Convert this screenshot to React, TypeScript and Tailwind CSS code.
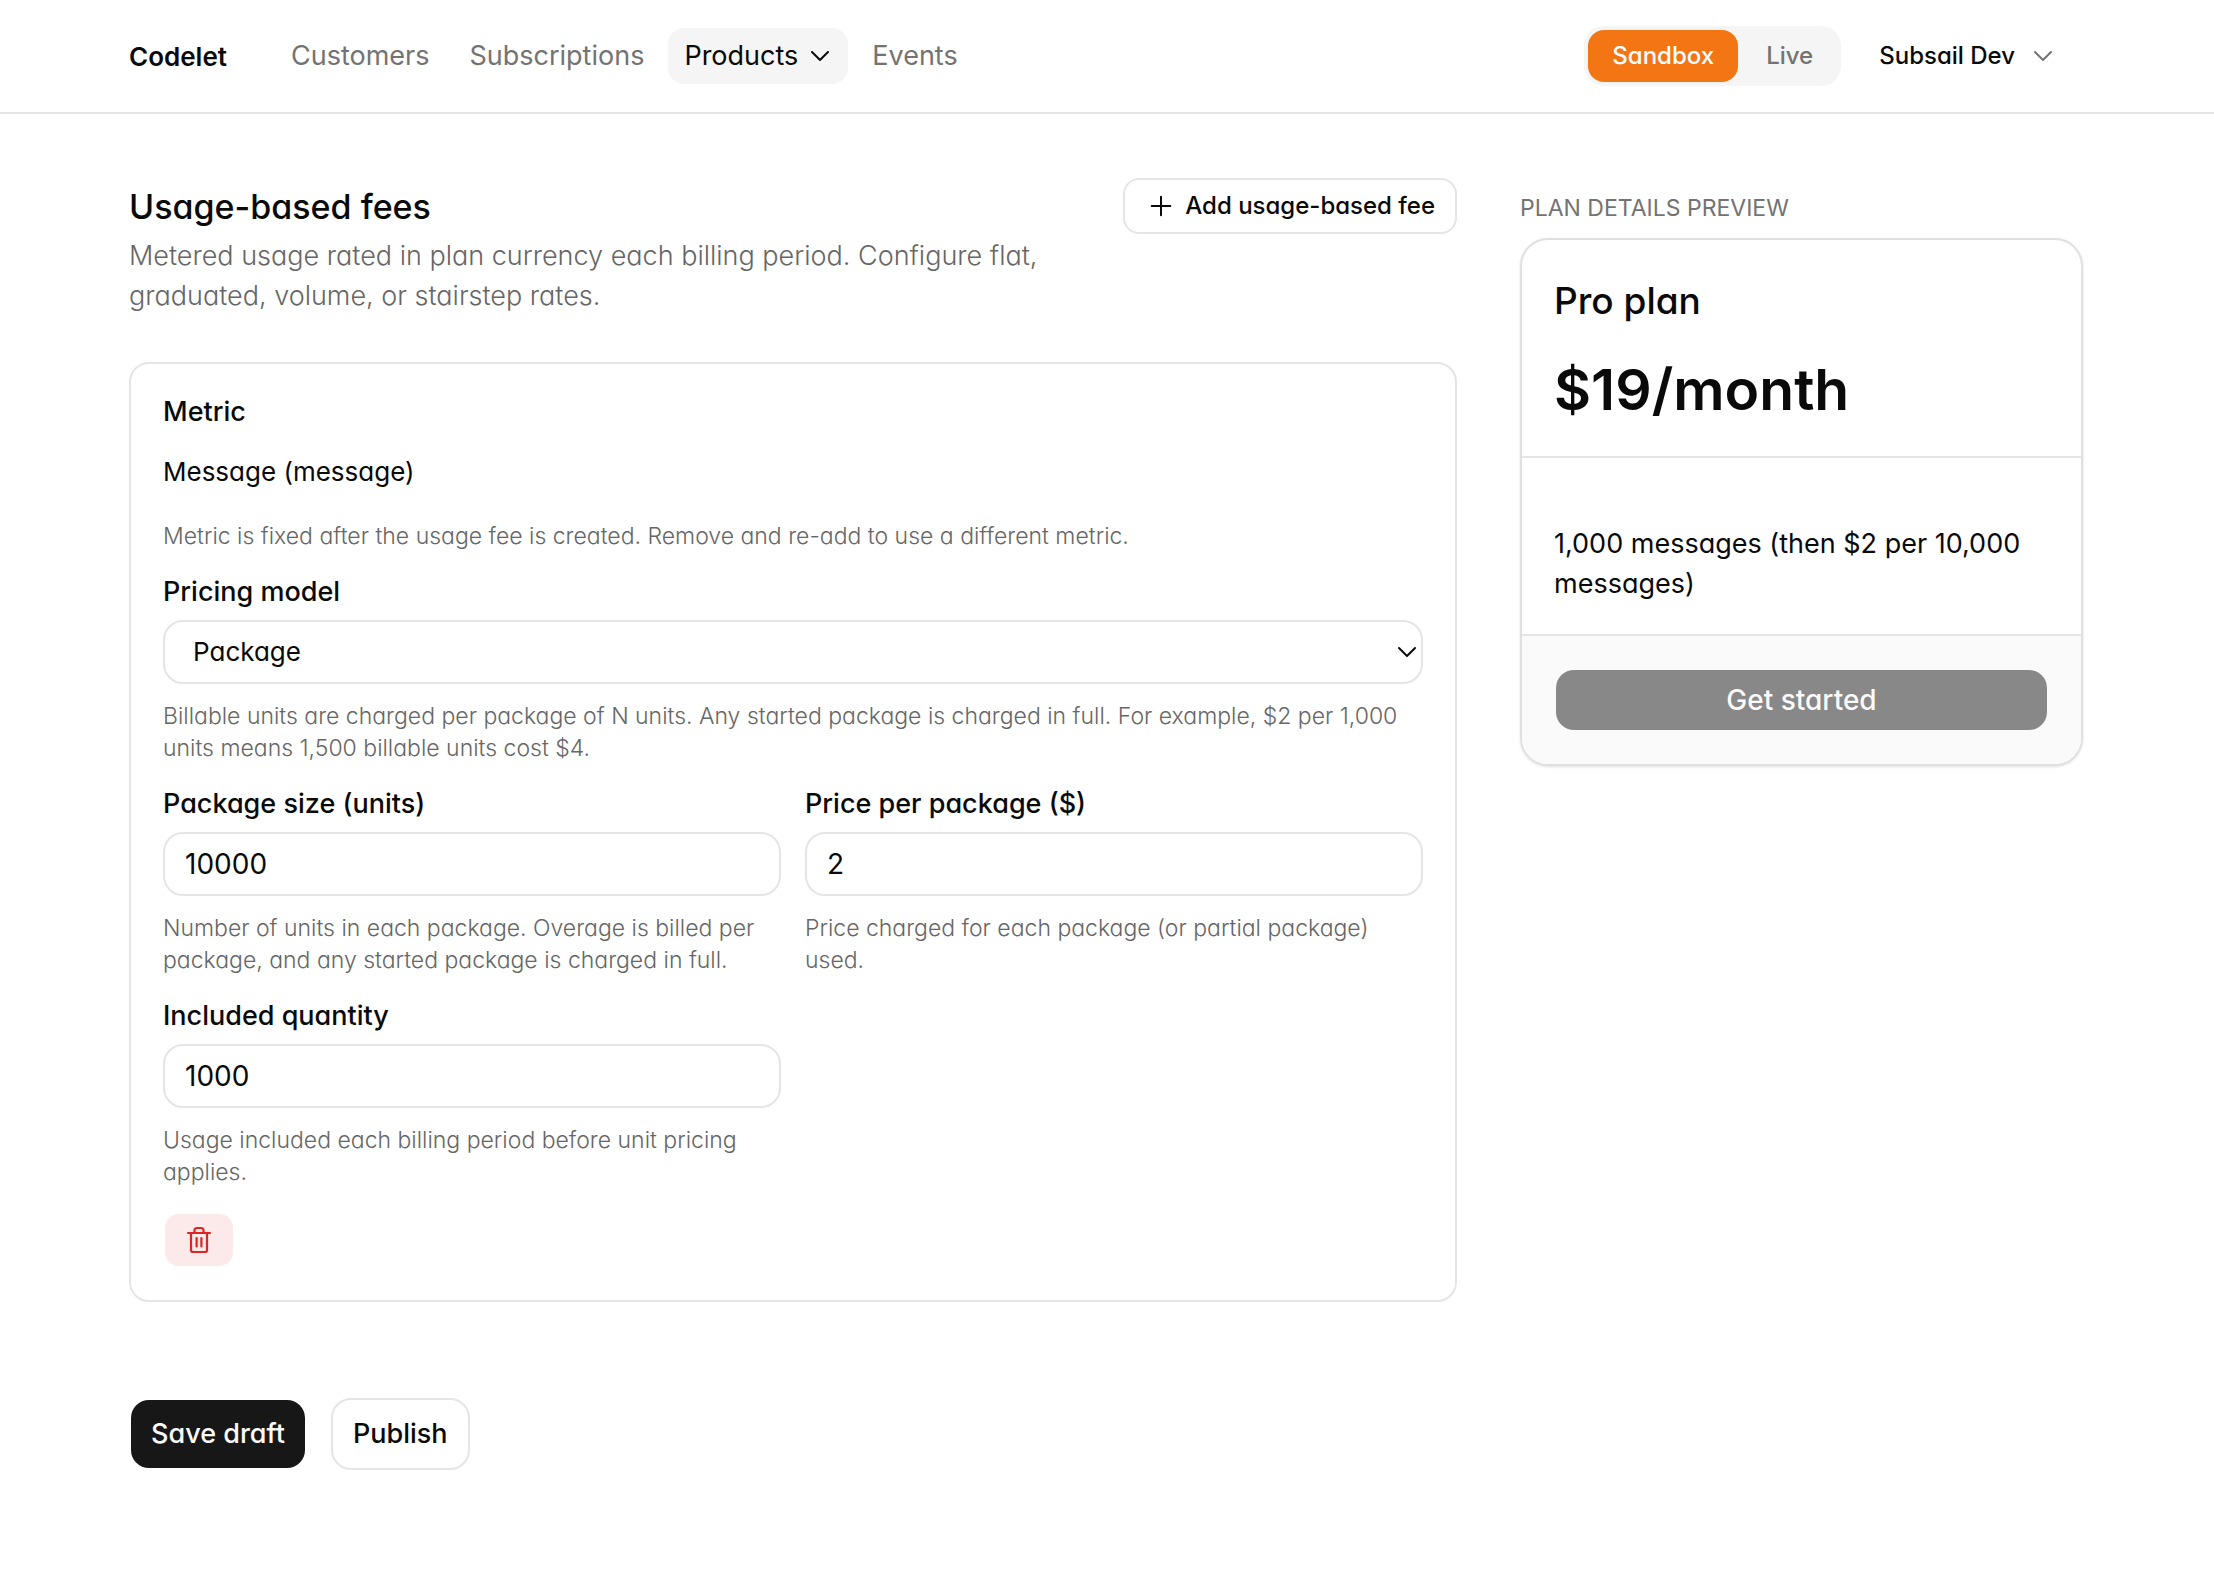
import { ChevronDown, Plus } from "lucide-react";
import type { ReactNode } from "react";

const outline =
  "border-2 border-[#e5e5e5] bg-white text-[#0a0a0a]";
const solid = "border-2 border-transparent bg-clip-padding";
const container = "mx-auto max-w-[2048px] pr-12 pl-[46px]";
const field =
  "h-16 w-full rounded-[20px] border-2 border-[#e5e5e5] bg-white leading-10 text-[#0a0a0a] outline-none";

function TrashIcon() {
  return (
    <svg viewBox="0 0 32 32" className="size-8" fill="none" stroke="currentColor" strokeWidth="2.200" strokeLinecap="round" strokeLinejoin="round" aria-hidden="true">
      <path d="M5 9h22" />
      <path d="M8 9v17a2 2 0 0 0 2 2h12a2 2 0 0 0 2-2V9" />
      <path d="M11.500 9V6.500a2.500 2.500 0 0 1 2.500-2.500h4a2.500 2.500 0 0 1 2.500 2.500V9" />
      <path d="M13.600 14v8.500M18.400 14v8.500" />
    </svg>
  );
}

function Label({ id, children }: { id?: string; children: ReactNode }) {
  return (
    <label htmlFor={id} className="block text-[27px] leading-10 font-medium">
      {children}
    </label>
  );
}

function Hint({ children }: { children: ReactNode }) {
  return <p className="mt-4 text-[23px] leading-8 font-light text-[#666666]">{children}</p>;
}

function NumberField({ id, label, value, hint }: { id: string; label: string; value: string; hint: string }) {
  return (
    <div>
      <Label id={id}>{label}</Label>
      <input id={id} type="text" inputMode="numeric" defaultValue={value} className={`${field} mt-2 px-5 text-[28px]`} />
      <Hint>{hint}</Hint>
    </div>
  );
}

function Header() {
  return (
    <header className="border-b-2 border-[#e5e5e5] bg-white">
      <div className={`${container} flex h-28 items-center`}>
        <a href="#home" className="text-[26px] font-semibold">Codelet</a>
        <nav className="ml-12 flex items-center gap-2 text-[27px] text-[#737373]">
          <a href="#customers" className="px-4">Customers</a>
          <a href="#subscriptions" className="px-4">Subscriptions</a>
          <button type="button" className="flex h-14 items-center gap-1.5 rounded-2xl bg-[#f5f5f5] pr-3 pl-4 text-[#0a0a0a]">
            Products
            <ChevronDown className="size-8" strokeWidth={1.5} />
          </button>
          <a href="#events" className="px-4">Events</a>
        </nav>
        <div className="ml-auto flex items-center gap-6 text-[24px]">
          <div className="flex h-[60px] items-center gap-1 rounded-[20px] bg-[#f5f5f5] p-1">
            <button type="button" className="h-[52px] rounded-2xl bg-[#f37514] px-6 font-medium text-white">Sandbox</button>
            <button type="button" className="h-[52px] rounded-2xl px-6 font-medium text-[#737373]">Live</button>
          </div>
          <button type="button" className="flex items-center gap-3 pr-6 pl-3.5 font-medium">
            Subsail Dev
            <ChevronDown className="size-8 text-[#737373]" strokeWidth={1.5} />
          </button>
        </div>
      </div>
    </header>
  );
}

function UsageFees() {
  return (
    <section className="min-w-0 flex-1">
      <div className="flex items-start justify-between gap-8">
        <div className="max-w-[920px]">
          <h2 className="text-[34px] leading-[58px] font-medium">Usage-based fees</h2>
          <p className="text-[27px] leading-10 font-light text-[#666666]">
            Metered usage rated in plan currency each billing period. Configure flat, graduated, volume, or stairstep rates.
          </p>
        </div>
        <button type="button" className={`${outline} flex h-14 shrink-0 items-center gap-2 rounded-2xl px-5 text-[24px] font-medium`}>
          <Plus className="size-8" strokeWidth={1.5} />
          Add usage-based fee
        </button>
      </div>

      <div className="mt-[46px] rounded-[20px] border-2 border-[#e5e5e5] p-8 pt-7">
        <h3 className="text-[27px] leading-10 font-medium">Metric</h3>
        <p className="mt-2 flex h-16 items-center text-[26px] leading-10">Message (message)</p>
        <Hint>Metric is fixed after the usage fee is created. Remove and re-add to use a different metric.</Hint>

        <div className="mt-5">
          <Label id="pricing-model">Pricing model</Label>
          <div className="relative mt-2">
            <select id="pricing-model" className={`${field} appearance-none px-7 text-[26px]`}>
              <option>Package</option>
            </select>
            <ChevronDown className="pointer-events-none absolute top-4 right-0 size-8" strokeWidth={1.5} />
          </div>
          <Hint>
            Billable units are charged per package of N units. Any started package is charged in full. For example, $2 per 1,000 units means 1,500 billable units cost $4.
          </Hint>
        </div>

        <div className="mt-5 grid grid-cols-2 gap-x-6 gap-y-5">
          <NumberField id="package-size" label="Package size (units)" value="10000" hint="Number of units in each package. Overage is billed per package, and any started package is charged in full." />
          <NumberField id="package-price" label="Price per package ($)" value="2" hint="Price charged for each package (or partial package) used." />
          <NumberField id="included-quantity" label="Included quantity" value="1000" hint="Usage included each billing period before unit pricing applies." />
        </div>

        <button type="button" aria-label="Remove usage fee" className={`${solid} mt-6 flex h-14 w-18 items-center justify-center rounded-2xl bg-[#fce9e9] text-[#dc2626]`}>
          <TrashIcon />
        </button>
      </div>

      <div className="mt-24 flex items-center gap-6">
        <button type="button" className={`${solid} h-18 rounded-[20px] bg-[#171717] px-5 text-[27px] font-medium text-[#fafafa]`}>Save draft</button>
        <button type="button" className={`${outline} h-18 rounded-[20px] px-5 text-[27px] font-medium`}>Publish</button>
      </div>
    </section>
  );
}

function PlanPreview() {
  return (
    <aside className="w-[563px] shrink-0">
      <h2 className="pt-3.5 text-[23px] leading-8 text-[#737373] uppercase">Plan details preview</h2>
      <div className="mt-3.5 overflow-hidden rounded-[28px] border-2 border-[#e0e0e0] shadow-sm">
        <div className="border-b-2 border-[#e5e5e5] px-8 pt-8 pb-7">
          <p className="text-[37px] leading-[58px] font-medium">Pro plan</p>
          <p className="mt-[22px] text-[57px] leading-[76px] font-semibold">$19/month</p>
        </div>
        <p className="border-b-2 border-[#e5e5e5] px-8 pt-[66px] pb-[30px] text-[27px] leading-10">
          1,000 messages (then $2 per 10,000 messages)
        </p>
        <div className="bg-[#fafafa] p-8">
          <button type="button" className={`${solid} h-16 w-full rounded-[20px] bg-[#888888] text-[28px] font-medium text-[#fafafa]`}>Get started</button>
        </div>
      </div>
    </aside>
  );
}

export default function App() {
  return (
    <div className="min-h-screen bg-white font-['Inter',sans-serif] text-[#0a0a0a] [font-feature-settings:'cv11']">
      <Header />
      <main className={`${container} flex gap-[63px] pt-16`}>
        <UsageFees />
        <PlanPreview />
      </main>
    </div>
  );
}
